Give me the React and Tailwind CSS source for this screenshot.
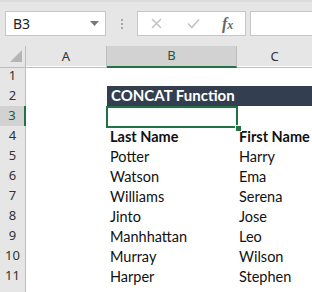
import React from "react";

const rows = [
  ["", ""],
  ["CONCAT", ""],
  ["", ""],
  ["Last Name", "First Name"],
  ["Potter", "Harry"],
  ["Watson", "Ema"],
  ["Williams", "Serena"],
  ["Jinto", "Jose"],
  ["Manhhattan", "Leo"],
  ["Murray", "Wilson"],
  ["Harper", "Stephen"],
  ["", ""],
];

export default function App() {
  const cellFont = { fontFamily: "Lato, 'Open Sans', sans-serif" };
  return (
    <div className="w-[312px] h-[292px] overflow-hidden bg-white" style={{ fontFamily: "'Segoe UI', 'Noto Sans', sans-serif" }}>
      {/* toolbar */}
      <div className="h-[46px] bg-[#e6e6e6] border-t-2 border-[#dcdcdc] flex items-start pt-[9px] pl-[5px]">
        <div className="w-[101px] h-[25px] bg-white border border-[#c6c6c6] flex items-center justify-between pl-[7px] pr-[6px]">
          <span className="text-[14px] text-[#222] leading-none" style={{ fontFamily: "'Noto Sans', sans-serif" }}>B3</span>
          <svg width="9" height="5" viewBox="0 0 9 5"><polygon points="0,0 9,0 4.5,5" fill="#777" /></svg>
        </div>
        <div className="w-[31px] h-[25px] flex flex-col items-center justify-center gap-[2px]">
          <div className="w-[2px] h-[2px] bg-[#a8a8a8]" />
          <div className="w-[2px] h-[2px] bg-[#a8a8a8]" />
          <div className="w-[2px] h-[2px] bg-[#a8a8a8]" />
        </div>
        <div className="w-[109px] h-[25px] bg-white border border-[#c6c6c6] flex items-center">
          <svg className="ml-[13px]" width="11" height="11" viewBox="0 0 11 11"><path d="M1 1 L10 10 M10 1 L1 10" stroke="#c4c4c4" strokeWidth="1.6" /></svg>
          <svg className="ml-[25px]" width="13" height="11" viewBox="0 0 13 11"><path d="M1 5.5 L4.8 9.5 L12 1.5" stroke="#c4c4c4" strokeWidth="1.8" fill="none" /></svg>
          <span className="ml-[22px] text-[16px] font-bold italic text-[#666] leading-none" style={{ fontFamily: "'Liberation Serif', serif" }}>
            f<span className="text-[12px]">x</span>
          </span>
        </div>
        <div className="ml-[4px] flex-1 h-[25px] bg-white border border-[#c6c6c6] border-r-0" />
      </div>

      {/* column headers */}
      <div className="grid grid-cols-[26px_81px_130px_1fr] h-[20px] bg-[#e6e6e6] text-[13px] text-[#333]">
        <div className="relative border-r border-b border-[#bdbdbd]">
          <svg className="absolute left-[10px] top-[4px]" width="12" height="12" viewBox="0 0 12 12"><polygon points="12,0 12,12 0,12" fill="#b5b5b5" /></svg>
        </div>
        <div className="border-r border-b border-[#bdbdbd] flex items-center justify-center">A</div>
        <div className="bg-[#d2d2d2] border-r border-[#bdbdbd] border-b-2 border-b-[#217346] flex items-center justify-center text-[#1e5b36]">B</div>
        <div className="border-b border-[#bdbdbd] flex items-center justify-center">C</div>
      </div>

      {/* rows */}
      {rows.map((r, i) => {
        const n = i + 1;
        const sel = n === 3;
        const bold = n === 4;
        return (
          <div key={n} className="grid grid-cols-[26px_81px_130px_1fr] h-[20px]">
            <div
              className={
                sel
                  ? "bg-[#d2d2d2] border-b border-[#c8c8c8] border-r-2 border-r-[#217346] flex items-center justify-center text-[13px] text-[#1e5b36]"
                  : "bg-[#e6e6e6] border-b border-[#d0d0d0] border-r border-r-[#bdbdbd] flex items-center justify-center text-[13px] text-[#333]"
              }
            >
              {n < 12 ? n : ""}
            </div>
            <div />
            {n === 2 ? (
              <div className="col-span-2 bg-[#333f4f] mb-[1px] flex items-center pl-[4px] text-white font-bold text-[15px] leading-none" style={cellFont}>
                CONCAT Function
              </div>
            ) : (
              <>
                <div className={`relative flex items-end pl-[3px] pb-[1px] text-[14.5px] text-[#111] leading-[18px] ${bold ? "font-bold" : ""}`} style={cellFont}>
                  {r[0]}
                  {sel && (
                    <>
                      <div className="absolute left-[-1px] top-0 w-[132px] h-[22px] border-2 border-[#217346]" />
                      <div className="absolute left-[128px] top-[19px] w-[5px] h-[5px] bg-[#217346] border border-white box-content" />
                    </>
                  )}
                </div>
                <div className={`flex items-end pl-[2px] pb-[1px] text-[14.5px] text-[#111] leading-[18px] ${bold ? "font-bold" : ""}`} style={cellFont}>
                  {r[1]}
                </div>
              </>
            )}
          </div>
        );
      })}
    </div>
  );
}
